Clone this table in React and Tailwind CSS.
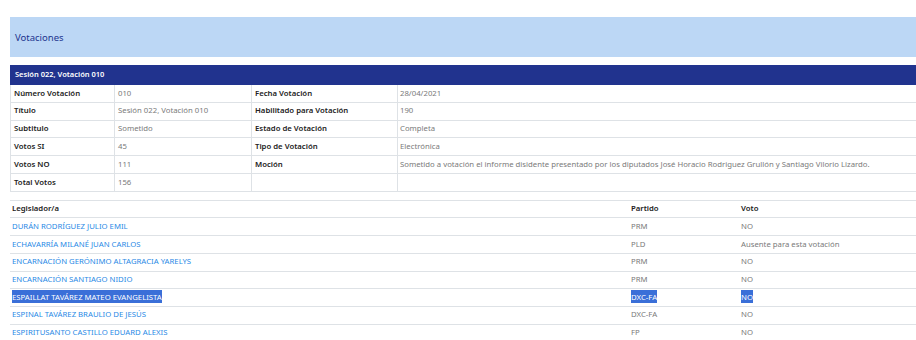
import React from 'react'

const info = [
    ['Número Votación', '010', 'Fecha Votación', '28/04/2021'],
    ['Título', 'Sesión 022, Votación 010', 'Habilitado para Votación', '190'],
    ['Subtitulo', 'Sometido', 'Estado de Votación', 'Completa'],
    ['Votos SI', '45', 'Tipo de Votación', 'Electrónica'],
    ['Votos NO', '111', 'Moción', 'Sometido a votación el informe disidente presentado por los diputados José Horacio Rodriguez Grullón y Santiago Vilorio Lizardo.'],
    ['Total Votos', '156', '', ''],
]

const votes = [
    ['DURÁN RODRÍGUEZ JULIO EMIL', 'PRM', 'NO'],
    ['ECHAVARRÍA MILANÉ JUAN CARLOS', 'PLD', 'Ausente para esta votación'],
    ['ENCARNACIÓN GERÓNIMO ALTAGRACIA YARELYS', 'PRM', 'NO'],
    ['ENCARNACIÓN SANTIAGO NIDIO', 'PRM', 'NO'],
    ['ESPAILLAT TAVÁREZ MATEO EVANGELISTA', 'DXC-FA', 'NO', true],
    ['ESPINAL TAVÁREZ BRAULIO DE JESÚS', 'DXC-FA', 'NO'],
    ['ESPIRITUSANTO CASTILLO EDUARD ALEXIS', 'FP', 'NO'],
]

// selected text highlight
const Sel = ({ on, children }) =>
    on ? <span className="bg-[#3a6fd8] text-white py-[1.5px]">{children}</span> : children

export default function App() {
    return (
        <div className="w-[916px] h-[340px] overflow-hidden bg-white pt-[17px] pl-[10px] font-['Noto_Sans',sans-serif] text-[7.75px] leading-none whitespace-nowrap">
            {/* Page title */}
            <div className="h-[40px] bg-[#bcd7f5] flex items-center pl-[5px] pt-[2px] text-[9.5px] text-[#21338e]">
                Votaciones
            </div>

            {/* Voting details */}
            <div className="mt-[8px] h-[20px] bg-[#21338e] flex items-center px-[5px] text-[7.5px] text-white font-semibold">
                Sesión 022, Votación 010
            </div>
            <div>
                {info.map((r, i) => (
                    <div key={i} className="h-[17.8px] flex border-b border-[#dee2e6]">
                        <div className="w-[105px] flex items-center border-l border-r border-[#dee2e6] pl-[3px] font-semibold text-[#222]">{r[0]}</div>
                        <div className="w-[137px] flex items-center border-r border-[#dee2e6] pl-[3px] text-[#7a7a7a]">{r[1]}</div>
                        <div className="w-[146px] flex items-center border-r border-[#dee2e6] pl-[3px] font-semibold text-[#222]">{r[2]}</div>
                        <div className="flex-1 flex items-center pl-[2px] text-[#7a7a7a]">{r[3]}</div>
                    </div>
                ))}
            </div>

            {/* Legislators */}
            <div className="mt-[8px] border-t border-[#dee2e6]">
                <div className="h-[17.7px] flex items-center border-b border-[#dee2e6] text-[#222] font-semibold">
                    <div className="w-[619px] pl-[2px]">Legislador/a</div>
                    <div className="w-[110px] pl-[2px]">Partido</div>
                    <div className="flex-1 pl-[2px]">Voto</div>
                </div>
                {votes.map((v, i) => (
                    <div key={i} className="h-[17.7px] flex items-center border-b border-[#dee2e6]">
                        <div className="w-[619px] pl-[2px] text-[#2a8ae6]"><Sel on={v[3]}>{v[0]}</Sel></div>
                        <div className="w-[110px] pl-[2px] text-[#7a7a7a]"><Sel on={v[3]}>{v[1]}</Sel></div>
                        <div className="flex-1 pl-[2px] text-[#7a7a7a]"><Sel on={v[3]}>{v[2]}</Sel></div>
                    </div>
                ))}
            </div>
        </div>
    )
}
